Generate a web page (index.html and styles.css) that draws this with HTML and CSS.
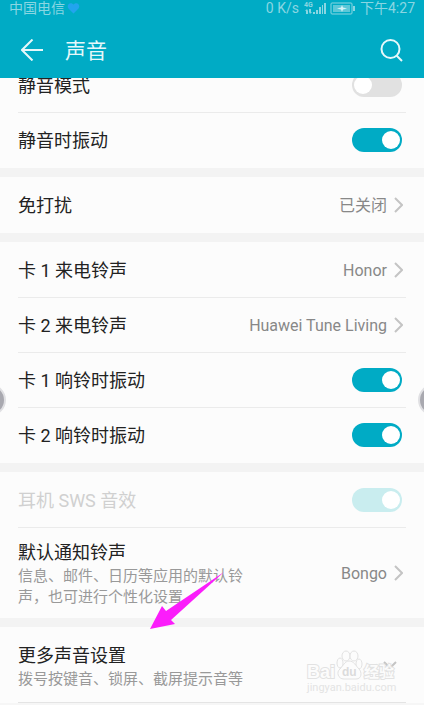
FILE: index.html
```
<!DOCTYPE html>
<html lang="zh-CN">
<head>
    <meta charset="UTF-8">
    <meta name="viewport" content="width=device-width, initial-scale=1.0">
    <title>声音</title>
    <link rel="stylesheet" href="styles.css">
</head>
<body>
    <header class="top">
        <div class="status">
            <span>中国电信</span>
            <svg class="heart" width="13" height="12" viewBox="0 0 13 12"><path d="M6.500 11.500L1.500 6.500C-1 3 3 -1 6.500 2.500C10 -1 14 3 11.500 6.500Z" fill="#22a4ee"/></svg>
            <span class="speed">0 K/s</span>
            <svg class="signal" width="22" height="14" viewBox="0 0 22 14" fill="#8ad6e2">
                <text x="0" y="6" font-size="7" font-weight="bold">4G</text>
                <path d="M1 10L3 8L4 10V13H2V10ZM5 8H7V11L8 11L6 13L5 11Z"/>
                <rect x="9" y="11" width="2" height="2"/>
                <rect x="12" y="9" width="2" height="4"/>
                <rect x="15" y="6" width="2" height="7"/>
                <rect x="18" y="4" width="1" height="9"/>
                <rect x="20" y="2" width="2" height="11"/>
            </svg>
            <svg class="battery" width="26" height="14" viewBox="0 0 26 14">
                <rect x="1" y="2" width="21" height="11" rx="1" fill="none" stroke="#8ad6e2"/>
                <rect x="3" y="4" width="17" height="7" fill="#5cc8d8"/>
                <path d="M7 7.500L11 6.500L12 4L13 6.500L17 7.500L13 8.500L12 11L11 8.500Z" fill="#d5f2f6"/>
                <rect x="23" y="5" width="2" height="5" fill="#8ad6e2"/>
            </svg>
            <span>下午4:27</span>
        </div>
        <div class="title-bar">
            <button class="icon-btn" aria-label="返回">
                <svg width="22" height="22" viewBox="0 0 22 22" fill="none" stroke="#e6f8fa" stroke-width="2"><path d="M22 11H1.500M11.500 0.500L1 11L11.500 21.500"/></svg>
            </button>
            <h1>声音</h1>
            <button class="icon-btn" aria-label="搜索">
                <svg width="23" height="23" viewBox="0 0 23 23" fill="none" stroke="#e6f8fa" stroke-width="2"><circle cx="10.500" cy="10" r="9"/><path d="M16.500 16.500L22 22"/></svg>
            </button>
        </div>
    </header>

    <main class="list">
        <section class="group">
            <label class="row">
                <span class="name">静音模式</span>
                <input type="checkbox" class="switch">
            </label>
            <label class="row">
                <span class="name">静音时振动</span>
                <input type="checkbox" class="switch" checked>
            </label>
        </section>

        <section class="group">
            <a class="row" href="#">
                <span class="name">免打扰</span>
                <span class="value">已关闭</span>
                <svg class="chevron" width="9" height="16" viewBox="0 0 9 16"><path d="M1 1L8 8L1 15"/></svg>
            </a>
        </section>

        <section class="group">
            <a class="row" href="#">
                <span class="name">卡 1 来电铃声</span>
                <span class="value">Honor</span>
                <svg class="chevron" width="9" height="16" viewBox="0 0 9 16"><path d="M1 1L8 8L1 15"/></svg>
            </a>
            <a class="row" href="#">
                <span class="name">卡 2 来电铃声</span>
                <span class="value">Huawei Tune Living</span>
                <svg class="chevron" width="9" height="16" viewBox="0 0 9 16"><path d="M1 1L8 8L1 15"/></svg>
            </a>
            <label class="row">
                <span class="name">卡 1 响铃时振动</span>
                <input type="checkbox" class="switch" checked>
            </label>
            <label class="row">
                <span class="name">卡 2 响铃时振动</span>
                <input type="checkbox" class="switch" checked>
            </label>
        </section>

        <section class="group">
            <label class="row disabled">
                <span class="name">耳机 SWS 音效</span>
                <input type="checkbox" class="switch" checked disabled>
            </label>
            <a class="row tall" href="#">
                <span class="text">
                    <span class="name">默认通知铃声</span>
                    <span class="desc">信息、邮件、日历等应用的默认铃声，也可进行个性化设置</span>
                </span>
                <span class="value">Bongo</span>
                <svg class="chevron" width="9" height="16" viewBox="0 0 9 16"><path d="M1 1L8 8L1 15"/></svg>
            </a>
        </section>

        <section class="group more">
            <a class="row tall" href="#">
                <span class="text">
                    <span class="name">更多声音设置</span>
                    <span class="desc">拨号按键音、锁屏、截屏提示音等</span>
                </span>
                <svg class="chevron down" width="14" height="8" viewBox="0 0 14 8"><path d="M1 1L7 7L13 1"/></svg>
            </a>
            <svg class="watermark" width="96" height="46" viewBox="0 0 96 46">
                <g fill="#fdfdfd" stroke="#dcdcdc">
                    <ellipse cx="34" cy="14" rx="3" ry="5"/>
                    <ellipse cx="40" cy="7" rx="4" ry="5"/>
                    <ellipse cx="48" cy="7" rx="4" ry="5"/>
                    <ellipse cx="53" cy="15" rx="3" ry="5"/>
                    <path d="M43 12C39 12 37 17 34 20C30 23 32 30 38 30H50C56 30 56 23 53 20C50 17 48 12 43 12Z"/>
                    <text class="mark-bai" x="1" y="29">Bai</text>
                    <text class="mark-cn" x="58" y="28">经验</text>
                </g>
                <text class="mark-du" x="36" y="27">du</text>
                <text class="mark-url" x="1" y="42">jingyan.baidu.com</text>
            </svg>
        </section>
    </main>

    <svg class="arrow" width="74" height="57" viewBox="0 0 74 57"><path d="M0 57L12 34L16 39L74 0L21 48L25 52Z" fill="#fb1dfb"/></svg>
    <svg class="knob left" width="6" height="32" viewBox="0 0 6 32"><circle cx="-10" cy="16" r="15"/></svg>
    <svg class="knob right" width="6" height="32" viewBox="0 0 6 32"><circle cx="16" cy="16" r="15"/></svg>
</body>
</html>
```
FILE: styles.css
```
* {
    box-sizing: border-box;
}
body {
    margin: 0;
    background: #fcfcfc;
    color: #222;
    font-family: Roboto, "Noto Sans CJK SC", sans-serif;
}
.top {
    position: relative;
    z-index: 1;
    height: 78px;
    background: #00abc5;
}
.status {
    display: flex;
    align-items: center;
    height: 16px;
    padding: 0 9px;
    font-size: 14px;
    line-height: 16px;
    color: #8ad6e2;
}
.heart {
    margin-left: 2px;
}
.speed {
    margin-left: auto;
}
.signal {
    margin-left: 5px;
}
.battery {
    margin: 0 4px;
}
.title-bar {
    display: flex;
    align-items: center;
    height: 68px;
    padding: 0 21px;
}
.title-bar h1 {
    flex: 1;
    margin: 0 0 0 22px;
    padding-top: 2px;
    font-size: 21px;
    line-height: 28px;
    font-weight: normal;
    color: #e6f8fa;
}
.icon-btn {
    display: flex;
    padding: 0;
    border: none;
    background: none;
    cursor: pointer;
}
/* first row is scrolled partly under the header */
.list {
    margin-top: -21px;
}
.group {
    position: relative;
    padding: 0 18px 1px;
    border-bottom: 9px solid #f3f3f3;
}
.row {
    display: flex;
    align-items: center;
    min-height: 55px;
    color: inherit;
    text-decoration: none;
    cursor: pointer;
}
.row + .row {
    border-top: 1px solid #ebebeb;
}
.name {
    flex: 1;
    padding-top: 2px;
    font-size: 18px;
    line-height: 24px;
}
.disabled {
    color: #d0d0d0;
}
.value {
    padding-top: 2px;
    font-size: 16px;
    line-height: 20px;
    color: #888;
}
.chevron {
    margin: 0 3px 0 7px;
    fill: none;
    stroke: #c4c4c4;
    stroke-width: 2;
}
.tall {
    min-height: 90px;
}
.text {
    display: flex;
    flex-direction: column;
    width: 232px;
    margin-right: auto;
    padding-top: 4px;
}
.text .name {
    flex: none;
    padding-top: 0;
}
.desc {
    padding-top: 1px;
    font-size: 15px;
    line-height: 21px;
    color: #999;
}
.switch {
    appearance: none;
    width: 50px;
    height: 24px;
    margin: 0 4px 0 0;
    padding: 3px 2px;
    border-radius: 12px;
    background: #e1e1e1;
}
.switch::before {
    content: "";
    display: block;
    width: 18px;
    height: 18px;
    border-radius: 50%;
    background: #fff;
}
.switch:checked {
    background: #00abc5;
}
.switch:checked::before {
    margin-left: auto;
}
.switch:disabled {
    background: #c9edef;
}
.more {
    padding-bottom: 0;
    border-bottom: 2px solid #f6f6f6;
}
.more .tall {
    min-height: 76px;
    border-bottom: 1px solid #e4e4e4;
}
.down {
    margin-right: 9px;
}
.watermark {
    position: absolute;
    right: 22px;
    top: 22px;
    opacity: 0.8;
}
.mark-bai, .mark-du {
    font-family: "Liberation Sans", sans-serif;
    font-weight: bold;
}
.mark-bai, .mark-cn {
    paint-order: stroke;
    stroke-width: 2;
}
.mark-bai {
    font-size: 18px;
}
.mark-du {
    font-size: 12px;
    fill: #d4d4d4;
}
.mark-cn {
    font-size: 15px;
    font-weight: bold;
}
.mark-url {
    font-size: 11px;
    fill: #dedede;
}
.arrow {
    position: absolute;
    left: 150px;
    top: 572px;
}
.knob {
    position: absolute;
    top: 384px;
    fill: #a9a9b0;
    stroke: #e0e0e3;
    stroke-width: 2;
}
.left {
    left: 0;
}
.right {
    right: 0;
}
```
